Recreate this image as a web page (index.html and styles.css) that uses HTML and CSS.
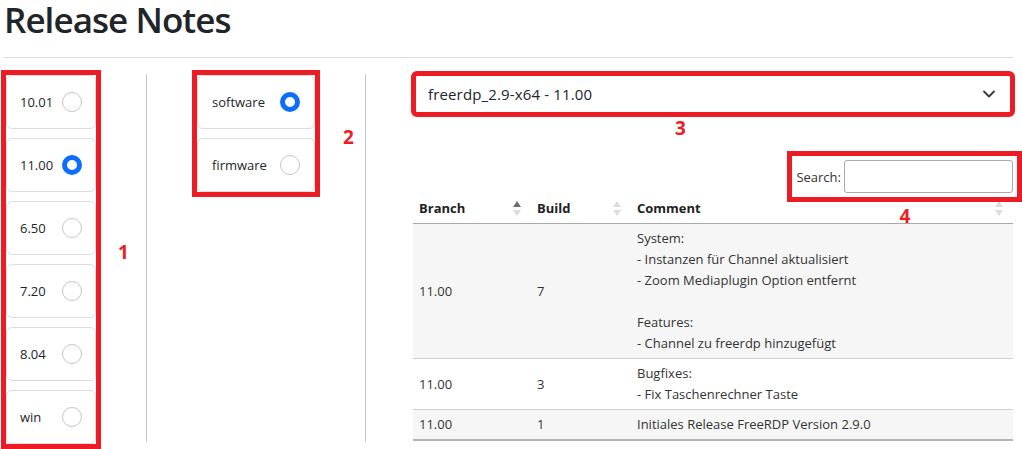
FILE: index.html
```html
<!DOCTYPE html>
<html lang="de">
<head>
<meta charset="utf-8">
<title>Release Notes</title>
<link rel="stylesheet" href="styles.css">
</head>
<body>
<div class="page">
  <h1 class="title">Release Notes</h1>
  <hr class="rule">
  <div class="main">
    <div class="opts opts-versions marked">
      <div class="opt"><span class="opt-label">10.01</span><span class="radio"></span></div>
      <div class="opt"><span class="opt-label">11.00</span><span class="radio checked"></span></div>
      <div class="opt"><span class="opt-label">6.50</span><span class="radio"></span></div>
      <div class="opt"><span class="opt-label">7.20</span><span class="radio"></span></div>
      <div class="opt"><span class="opt-label">8.04</span><span class="radio"></span></div>
      <div class="opt"><span class="opt-label">win</span><span class="radio"></span></div>
      <span class="tag tag-1">1</span>
    </div>
    <div class="vr"></div>
    <div class="types">
      <div class="opts opts-types marked">
        <div class="opt"><span class="opt-label">software</span><span class="radio checked"></span></div>
        <div class="opt"><span class="opt-label">firmware</span><span class="radio"></span></div>
        <span class="tag tag-2">2</span>
      </div>
    </div>
    <div class="vr"></div>
    <div class="content">
      <div class="select marked">
        <span class="select-text">freerdp_2.9-x64 - 11.00</span>
        <svg class="chevron" width="12" height="8" viewBox="0 0 12 8"><polyline points="1,1.5 6,6.5 11,1.5" fill="none" stroke="#343a40" stroke-width="1.8" stroke-linecap="round" stroke-linejoin="round"/></svg>
        <span class="tag tag-3">3</span>
      </div>
      <div class="search-row">
        <div class="search marked">
          <label class="search-label">Search:</label>
          <input class="search-input" type="search">
          <span class="tag tag-4">4</span>
        </div>
      </div>
      <table class="notes">
        <colgroup><col class="c-branch"><col class="c-build"><col class="c-comment"></colgroup>
        <thead>
          <tr>
            <th><div class="th-in"><span>Branch</span><svg class="sort" width="8" height="15" viewBox="0 0 8 15"><polygon points="4,0 8,6 0,6" fill="#6f6f6f"/><polygon points="0,9 8,9 4,15" fill="#dcdcdc"/></svg></div></th>
            <th><div class="th-in"><span>Build</span><svg class="sort" width="8" height="15" viewBox="0 0 8 15"><polygon points="4,0 8,6 0,6" fill="#dcdcdc"/><polygon points="0,9 8,9 4,15" fill="#dcdcdc"/></svg></div></th>
            <th><div class="th-in"><span>Comment</span><svg class="sort" width="8" height="15" viewBox="0 0 8 15"><polygon points="4,0 8,6 0,6" fill="#dcdcdc"/><polygon points="0,9 8,9 4,15" fill="#dcdcdc"/></svg></div></th>
          </tr>
        </thead>
        <tbody>
          <tr class="odd">
            <td>11.00</td>
            <td>7</td>
            <td>System:<br>- Instanzen für Channel aktualisiert<br>- Zoom Mediaplugin Option entfernt<br><br>Features:<br>- Channel zu freerdp hinzugefügt</td>
          </tr>
          <tr>
            <td>11.00</td>
            <td>3</td>
            <td>Bugfixes:<br>- Fix Taschenrechner Taste</td>
          </tr>
          <tr class="odd">
            <td>11.00</td>
            <td>1</td>
            <td>Initiales Release FreeRDP Version 2.9.0</td>
          </tr>
        </tbody>
      </table>
    </div>
  </div>
</div>
</body>
</html>
```

FILE: styles.css
```css
* { box-sizing: border-box; }
html, body { margin: 0; padding: 0; background: #fff; }
body {
  font-family: "Open Sans", "Noto Sans", sans-serif;
  color: #212529;
  width: 1022px;
  height: 449px;
  overflow: hidden;
}
.page { padding: 0 9px 0 0; }
.title {
  margin: 2px 0 0 4px;
  font-size: 35px;
  line-height: 1;
  font-weight: 600;
  color: #212529;
  letter-spacing: -0.95px;
}
.rule {
  margin: 20px 0 0 3px;
  border: 0;
  border-top: 1px solid #dcdcdc;
  height: 0;
}
.main {
  display: flex;
  align-items: flex-start;
  margin-top: 17px;
  padding-left: 6px;
}
.marked { outline: 5px solid #ed1c24; }
.opts {
  position: relative;
  display: flex;
  flex-direction: column;
  gap: 9px;
}
.opts-versions { width: 90px; }
.opts-types { width: 118px; outline-offset: 0; }
.types { margin-left: 50px; }
.opt {
  height: 54px;
  border: 1px solid #dcdcdc;
  border-radius: 6px;
  display: flex;
  align-items: center;
  justify-content: space-between;
  padding: 0 13px 0 13px;
  background: #fff;
}
.opts-types .opt { padding: 0 14px 0 14px; }
.opt-label {
  font-size: 13px;
  font-weight: 500;
  color: #212529;
}
.radio {
  width: 20px;
  height: 20px;
  border-radius: 50%;
  border: 1px solid #c4c4c4;
  background: #fff;
  flex: none;
}
.radio.checked { border: 5px solid #0d6efd; }
.vr {
  width: 1px;
  align-self: stretch;
  background: #c8c8c8;
  margin: -1px 0 2px 50px;
  height: 368px;
}
.content {
  margin-left: 47px;
  width: 600px;
}
.select {
  position: relative;
  height: 38px;
  margin: 0 2px;
  display: flex;
  align-items: center;
  justify-content: space-between;
  padding: 0 15px 0 12px;
  border: 1px solid #dee2e6;
  outline-offset: -1px;
  border-radius: 2px;
}
.select-text { font-size: 15px; color: #212529; letter-spacing: 0.15px; }
.chevron { display: block; }
.search-row {
  display: flex;
  justify-content: flex-end;
  margin-top: 47px;
}
.search {
  position: relative;
  display: flex;
  align-items: center;
  gap: 3px;
  outline-offset: 4px;
}
.search-label { font-size: 13px; color: #333; }
.search-input {
  width: 169px;
  height: 33px;
  border: 1px solid #aaa;
  border-radius: 3px;
  background: #fff;
  margin: 0;
  padding: 0 6px;
}
.notes {
  width: 600px;
  border-collapse: collapse;
  font-size: 13px;
  line-height: 21px;
  color: #333;
  margin-top: 1px;
}
.c-branch { width: 118px; }
.c-build { width: 100px; }
.notes th {
  text-align: left;
  font-weight: 700;
  padding: 4px 10px 4px 6px;
  border-bottom: 1px solid #a8a8a8;
  color: #222;
}
.th-in {
  display: flex;
  align-items: center;
  justify-content: space-between;
}
.sort { display: block; }
.notes td {
  padding: 4px 6px;
  vertical-align: middle;
  border-top: 1px solid #cfcfcf;
}
.notes tbody tr:first-child td { border-top: 0; }
.notes tr.odd td { background: #f6f6f6; }
.notes tbody tr:last-child td { border-bottom: 2px solid #b4b4b4; }
.tag {
  position: absolute;
  font-size: 19px;
  line-height: 20px;
  font-weight: 700;
  color: #ed1c24;
}
.tag-1 { left: calc(100% + 22px); top: 167px; }
.tag-2 { left: calc(100% + 28px); top: 52px; }
.tag-3 { left: 259px; top: calc(100% + 6px); }
.tag-4 { left: 103px; top: calc(100% + 13px); }
```
